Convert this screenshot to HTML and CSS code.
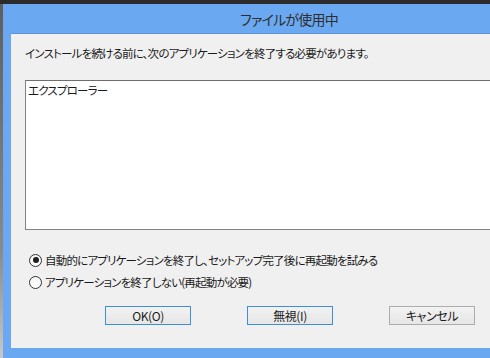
FILE: index.html
```html
<!DOCTYPE html>
<html lang="ja">
<head>
    <meta charset="UTF-8">
    <title>ファイルが使用中</title>
    <link rel="stylesheet" href="styles.css">
</head>
<body>

<div class="desktop">
    <div class="left-strip"></div>
    <div class="window">
        <div class="title-bar">ファイルが使用中</div>
        <div class="client">
            <p class="message">インストールを続ける前に、次のアプリケーションを終了する必要があります。</p>

            <div class="app-list">
                <div class="app-item">エクスプローラー</div>
            </div>

            <div class="options">
                <label class="option">
                    <span class="radio checked"></span>
                    自動的にアプリケーションを終了し、セットアップ完了後に再起動を試みる
                </label>
                <label class="option">
                    <span class="radio"></span>
                    アプリケーションを終了しない(再起動が必要)
                </label>
            </div>

            <div class="buttons">
                <button class="btn default">OK(O)</button>
                <button class="btn default">無視(I)</button>
                <button class="btn">キャンセル</button>
            </div>
        </div>
    </div>
</div>

</body>
</html>
```

FILE: styles.css
```css
body {
    margin: 0;
    padding: 0;
    width: 490px;
    height: 358px;
    overflow: hidden;
    background-color: #2b2b2b;
    font-family: 'Noto Sans CJK JP', 'Noto Sans', sans-serif;
    font-size: 11.5px;
    letter-spacing: -0.8px;
    color: #1a1a1a;
    font-feature-settings: "palt";
}

.desktop {
    display: flex;
    padding-top: 4px;
}

.left-strip {
    width: 3px;
    flex-shrink: 0;
    height: 354px;
    background: linear-gradient(#5e5e5e, #8a8a8a 70%, #c8c8c8);
}

.window {
    width: 572px;
    flex-shrink: 0;
    background-color: #6aa9f1;
    padding: 0 8px 8px 8px;
    box-sizing: border-box;
}

.title-bar {
    height: 30px;
    line-height: 30px;
    text-align: center;
    font-size: 14px;
    color: #2e2e2e;
    border-bottom: 1px solid #5a95d8;
    box-sizing: border-box;
}

.client {
    background-color: #f0f0f0;
    height: 314px;
    padding: 11px 14px 0 14px;
    box-sizing: border-box;
}

.message {
    margin: 0;
    line-height: 16px;
}

.app-list {
    margin-top: 19px;
    height: 150px;
    background-color: #fff;
    border: 1px solid #828282;
    border-top-color: #6e6e6e;
    box-sizing: border-box;
}

.app-item {
    padding: 1px 2px;
    line-height: 16px;
}

.options {
    margin-top: 19px;
    padding-left: 4px;
}

.option {
    display: flex;
    align-items: center;
    height: 22px;
}

.radio {
    width: 11px;
    height: 11px;
    border: 1px solid #333;
    border-radius: 50%;
    background: linear-gradient(#f4f4f4, #fff);
    margin-right: 3px;
    display: flex;
    align-items: center;
    justify-content: center;
}

.radio.checked::after {
    content: "";
    width: 6px;
    height: 6px;
    border-radius: 50%;
    background-color: #1e1e1e;
}

.buttons {
    margin-top: 13px;
    padding-left: 80px;
    display: flex;
    gap: 56px;
}

.btn {
    width: 86px;
    height: 19px;
    padding: 0;
    font-family: inherit;
    font-size: 12px;
    letter-spacing: -0.4px;
    font-feature-settings: "palt";
    color: #1a1a1a;
    background: linear-gradient(#f2f2f2, #e6e6e6);
    border: 1px solid #adadad;
    border-radius: 0;
}

.btn.default {
    border-color: #3c8ee0;
}
```
